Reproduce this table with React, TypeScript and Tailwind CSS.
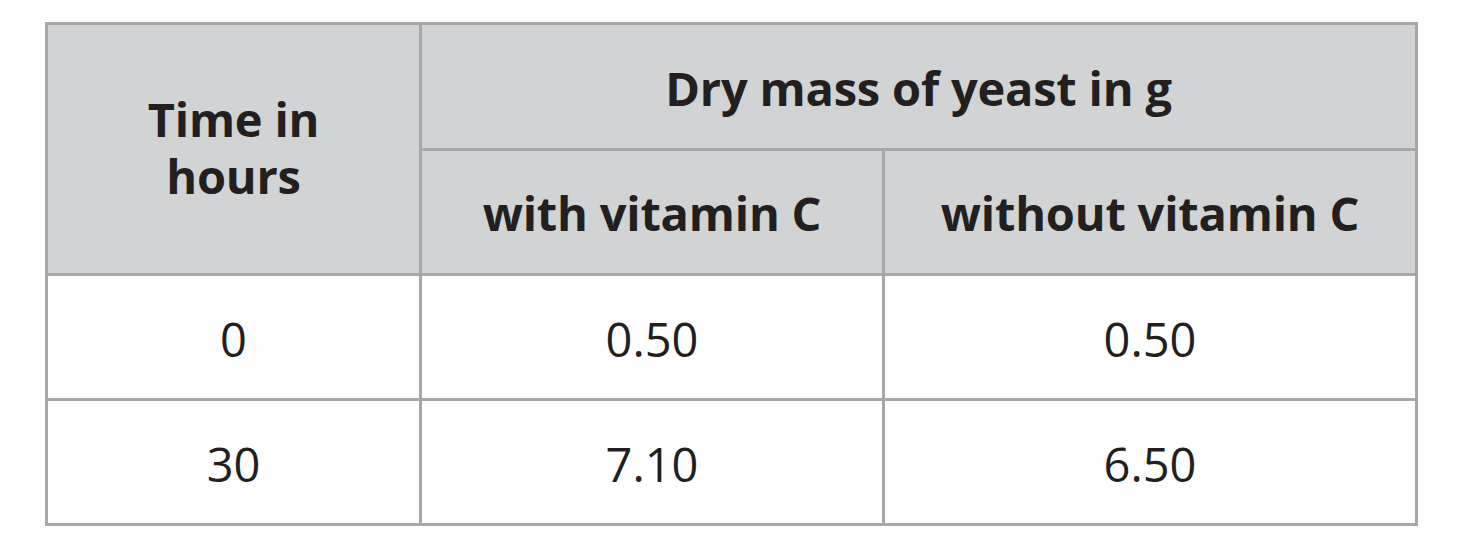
import React from "react";

const font = { fontFamily: '"Open Sans", "Liberation Sans", sans-serif' };

export default function App() {
  return (
    <div className="w-[1470px] h-[544px] bg-white pt-[22px] pl-[45px]" style={font}>
      <div className="grid w-[1373px] grid-cols-[371px_460px_530px] grid-rows-[123px_122px_122px_122px] gap-[3px] p-[3px] bg-[#a7a8ab] text-[#231f20]">
        <div className="row-span-2 bg-[#d1d3d4] flex flex-col items-center justify-center text-center font-bold text-[47px] tracking-[-0.2px] pb-[2px]">
          <div className="leading-[57px]">Time in</div>
          <div className="leading-[57px]">hours</div>
        </div>
        <div className="col-span-2 bg-[#d1d3d4] flex items-center justify-center font-bold text-[47px] tracking-[-0.2px] pt-[4px]">
          Dry mass of yeast in g
        </div>
        <div className="bg-[#d1d3d4] flex items-center justify-center font-bold text-[47px] tracking-[-0.2px] pt-[2px]">
          with vitamin C
        </div>
        <div className="bg-[#d1d3d4] flex items-center justify-center font-bold text-[47px] tracking-[-0.2px] pt-[2px]">
          without vitamin C
        </div>
        <div className="bg-white flex items-center justify-center text-[47px] pt-[4px]">0</div>
        <div className="bg-white flex items-center justify-center text-[47px] pt-[4px]">0.50</div>
        <div className="bg-white flex items-center justify-center text-[47px] pt-[4px]">0.50</div>
        <div className="bg-white flex items-center justify-center text-[47px] pt-[4px]">30</div>
        <div className="bg-white flex items-center justify-center text-[47px] pt-[4px]">7.10</div>
        <div className="bg-white flex items-center justify-center text-[47px] pt-[4px]">6.50</div>
      </div>
    </div>
  );
}
